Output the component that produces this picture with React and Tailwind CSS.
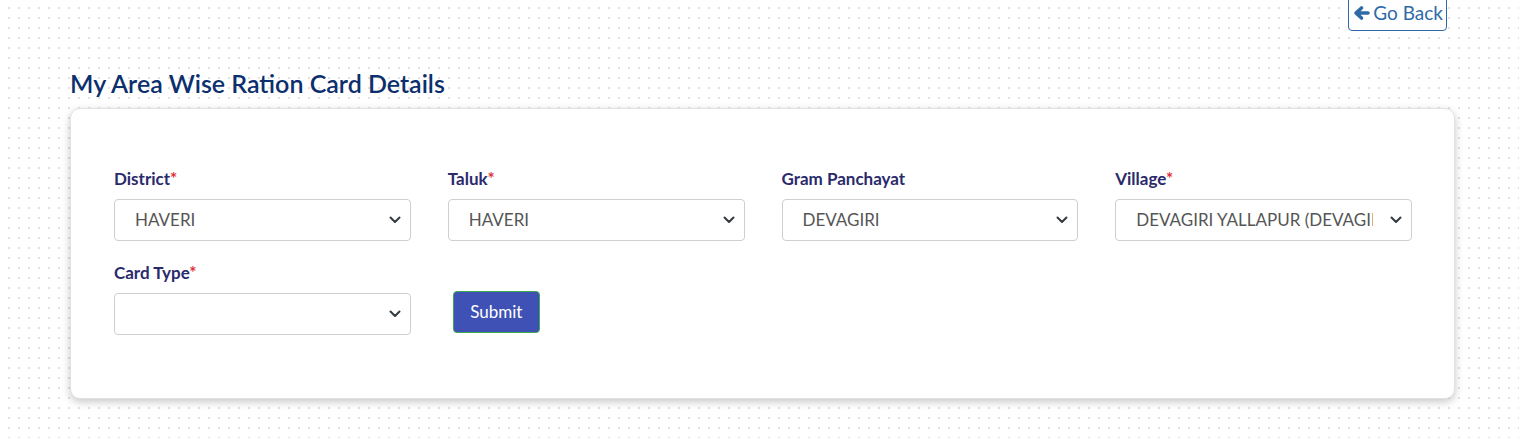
import { useState } from 'react';

// Filter fields shown on the card
const fields = [
  { label: 'District', required: true, value: 'HAVERI', options: ['HAVERI'] },
  { label: 'Taluk', required: true, value: 'HAVERI', options: ['HAVERI'] },
  { label: 'Gram Panchayat', required: false, value: 'DEVAGIRI', options: ['DEVAGIRI'] },
  { label: 'Village', required: true, value: 'DEVAGIRI YALLAPUR (DEVAGIRI)', options: ['DEVAGIRI YALLAPUR (DEVAGIRI)'] },
];

const Chevron = () => (
  <svg className="pointer-events-none absolute right-[10px] top-1/2 -translate-y-1/2" width="12" height="8" viewBox="0 0 12 8" fill="none">
    <path d="M1.5 1.5 6 6l4.5-4.5" stroke="#343a40" strokeWidth="2" strokeLinecap="round" strokeLinejoin="round" />
  </svg>
);

function SelectField({ label, required, value, options }) {
  const [val, setVal] = useState(value);
  return (
    <div className="flex flex-col">
      <label className="mb-[9px] text-[17px] font-bold leading-[22px] text-[#2a2a6c]">
        {label}
        {required && <span className="text-[#e0313b]">*</span>}
      </label>
      <div className="relative">
        <select
          value={val}
          onChange={(e) => setVal(e.target.value)}
          className="h-[42px] w-full appearance-none overflow-hidden rounded-[4px] border border-[#cfcfcf] bg-white pl-[20px] pr-[38px] text-[17px] text-[#555] outline-none"
        >
          {options.map((o) => (
            <option key={o} value={o}>{o}</option>
          ))}
        </select>
        <Chevron />
      </div>
    </div>
  );
}

export default function App() {
  return (
    <div
      className="relative min-h-[438px] w-full bg-white bg-[radial-gradient(#e2e2e2_1px,transparent_1.2px)] bg-[size:10px_10px] bg-[position:4px_3px]"
      style={{ fontFamily: 'Lato, "Liberation Sans", sans-serif' }}
    >
      <div className="flex justify-end pr-[72px]">
        <button className="-mt-[6px] flex h-[37px] items-center gap-[3px] rounded-[4px] border border-[#2f6aa7] bg-white pl-[4px] pr-[3px] pt-[1px] text-[19px] text-[#2f6aa7]">
          <svg width="17" height="16" viewBox="0 0 17 16" fill="none">
            <path d="M15 8H4M8.5 3 3 8l5.5 5" stroke="#2f6aa7" strokeWidth="3.6" strokeLinecap="round" strokeLinejoin="round" />
          </svg>
          Go Back
        </button>
      </div>

      <div className="px-[64px] pt-[37px] pb-[40px]">
        <h2 className="ml-[6px] mb-[10px] text-[25px] font-semibold leading-[30px] text-[#0c2f6e]">
          My Area Wise Ration Card Details
        </h2>
        <div className="ml-[6px] w-[1385px] rounded-[10px] border border-[#e2e2e2] bg-white pl-[43px] pr-[42px] pt-[59px] pb-[63px] shadow-[0_3px_8px_rgba(0,0,0,0.22)]">
          <div className="grid grid-cols-4 gap-x-[37px]">
            {fields.map((f) => (
              <SelectField key={f.label} {...f} />
            ))}
          </div>
          <div className="mt-[21px] grid grid-cols-4 gap-x-[37px]">
            <SelectField label="Card Type" required value="" options={['']} />
            <div className="flex items-end pb-[2px] pl-[5px]">
              <button className="h-[42px] w-[87px] rounded-[4px] border border-[#3caa4c] bg-[#3f51b5] text-[17px] text-white">
                Submit
              </button>
            </div>
          </div>
        </div>
      </div>
    </div>
  );
}
